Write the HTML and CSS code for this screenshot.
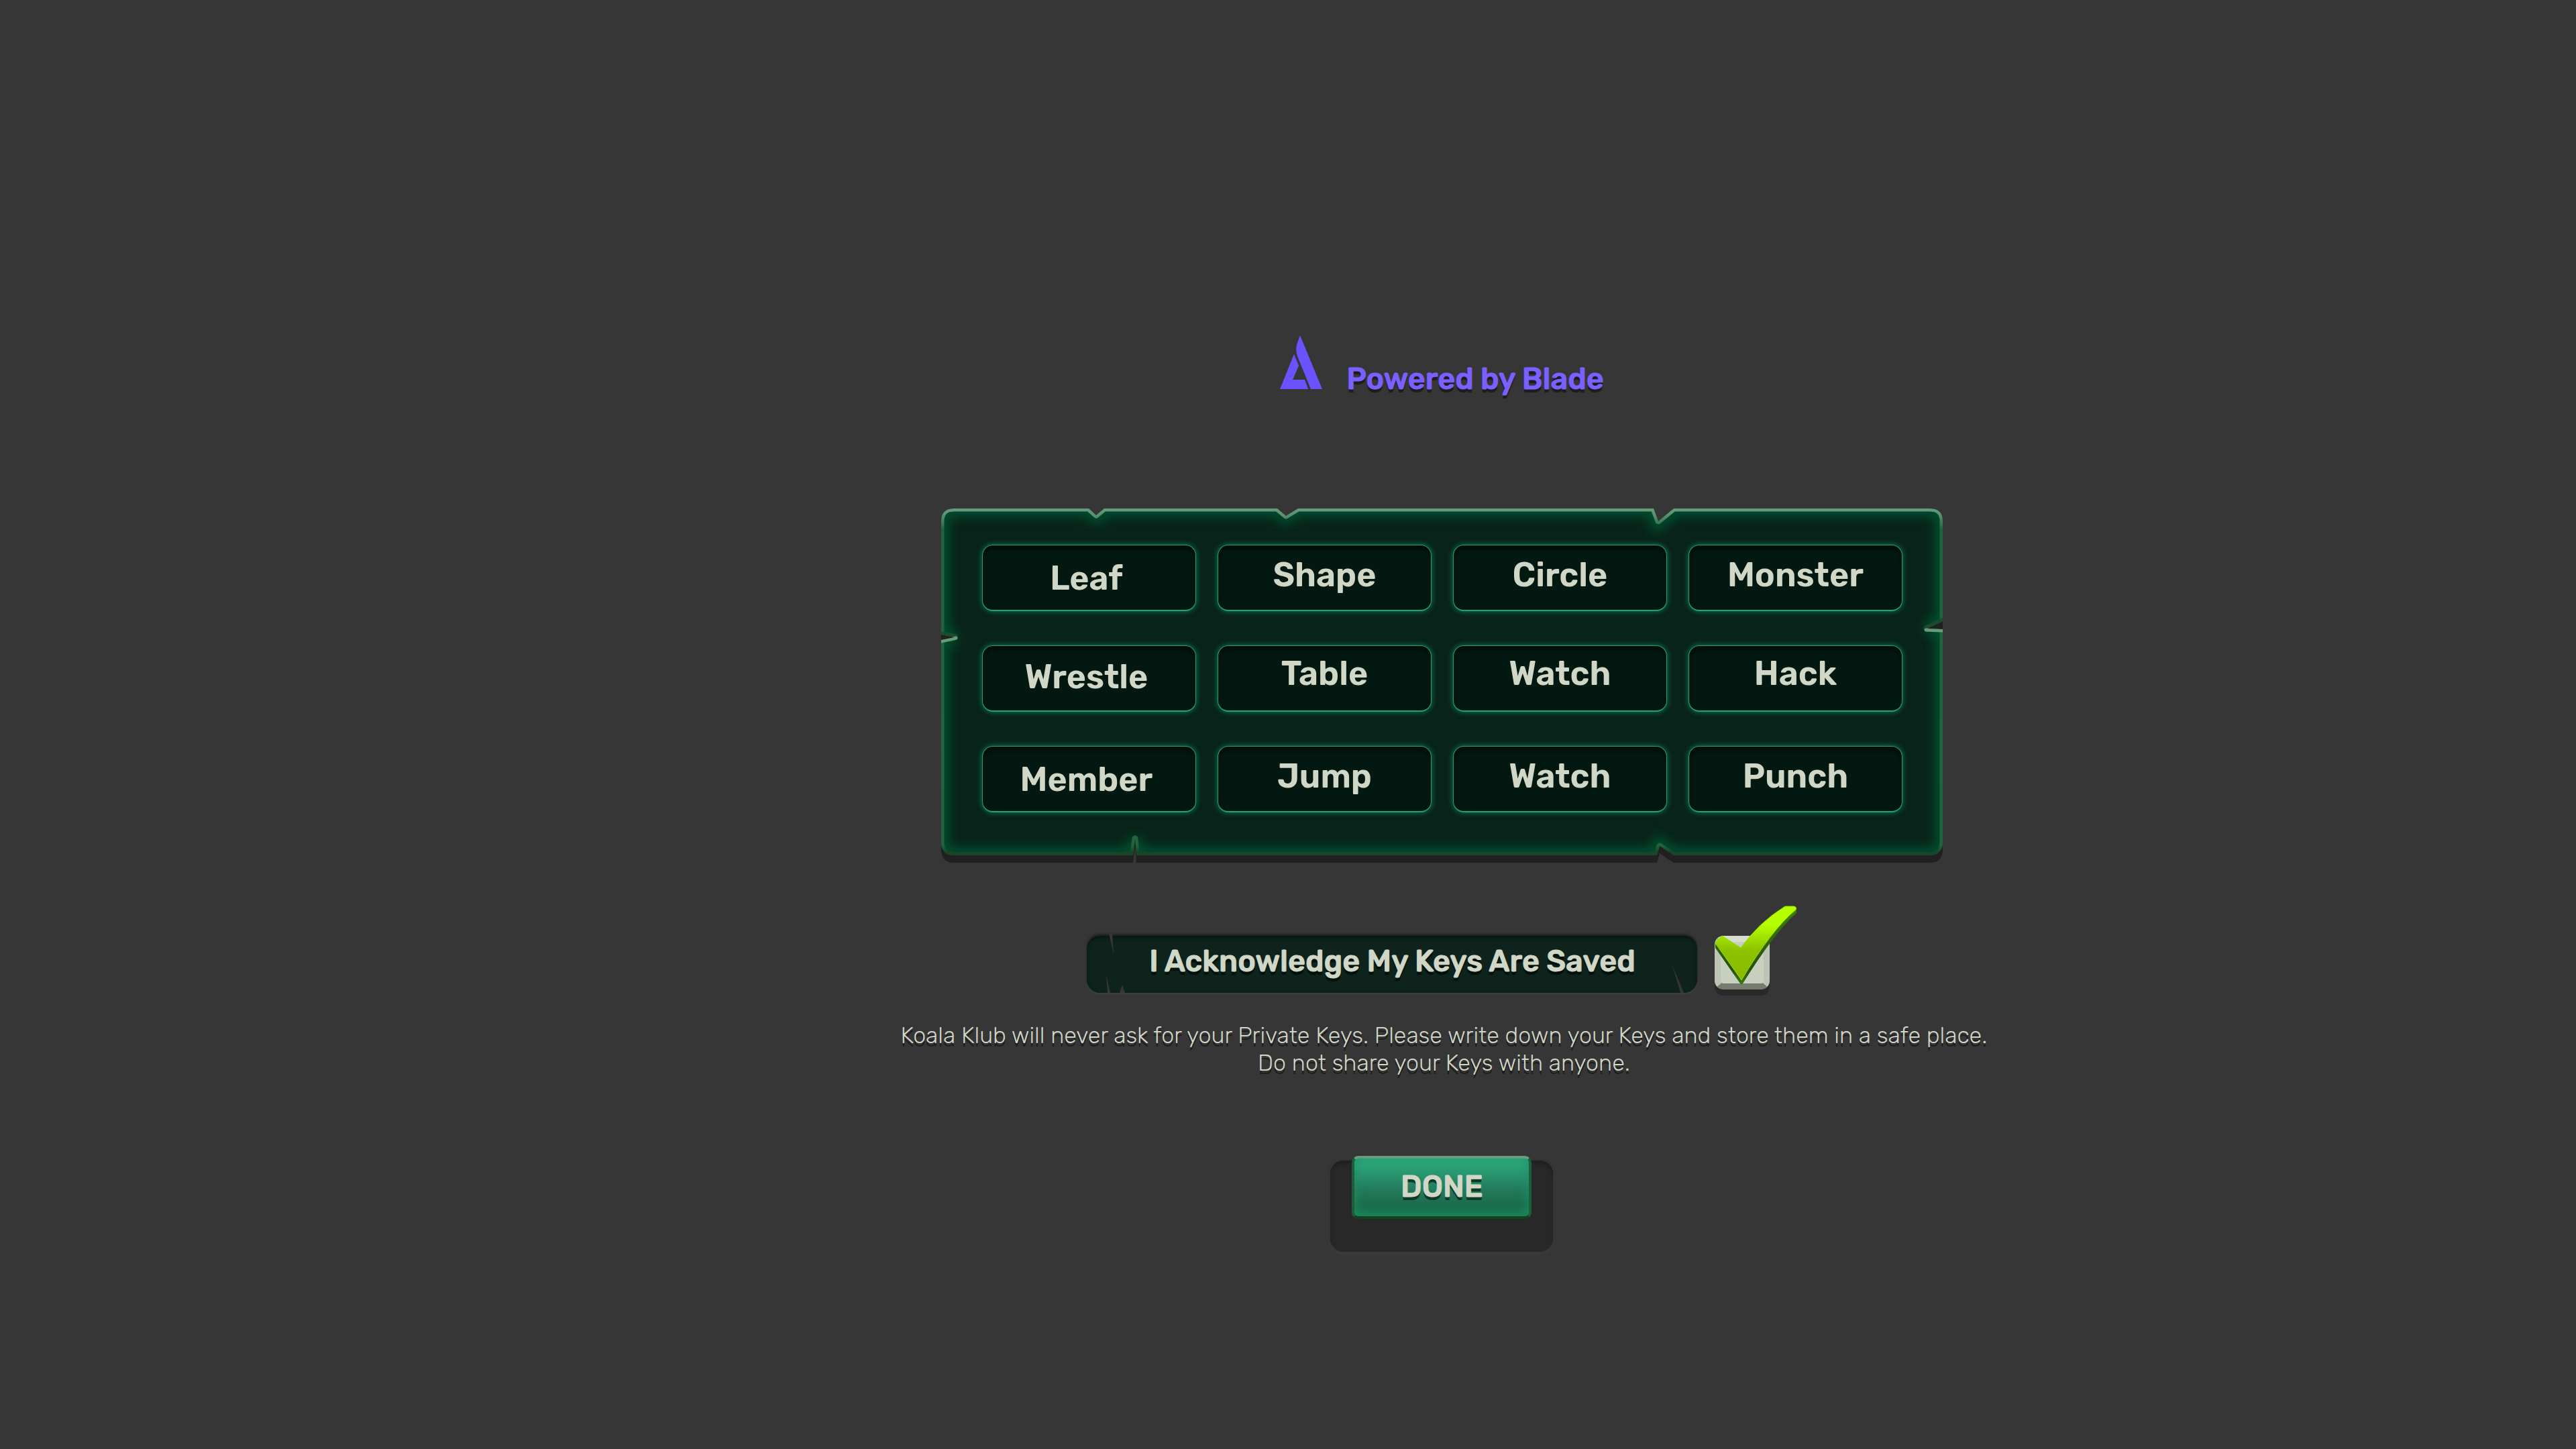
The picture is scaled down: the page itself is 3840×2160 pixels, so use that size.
FILE: index.html
```html
<!DOCTYPE html>
<html lang="en">
<head>
<meta charset="utf-8">
<meta name="viewport" content="width=device-width, initial-scale=1">
<title>Koala Klub – Private Keys</title>
<link rel="stylesheet" href="styles.css">
</head>
<body>
<main class="screen">
  <header class="brand">
    <svg class="brand-mark" viewBox="0 0 63 80" aria-hidden="true">
      <path d="M30 0 63 80H46L26 31Q23 23 25 14Z"/>
      <path d="M21 28 28 45 19 66H37L42 80H0Z"/>
    </svg>
    <p class="brand-text">Powered by Blade</p>
  </header>

  <section class="panel" aria-label="Recovery words">
    <svg class="panel-frame" viewBox="0 0 1493 528" preserveAspectRatio="none" aria-hidden="true">
      <defs>
        <path id="slab" d="M19 0H220L231 10 243 0H501L514 11 532 0H1062L1069 19 1092 0H1474Q1493 0 1493 19V168L1470 179 1493 180V497Q1493 517 1474 517H1092L1071 503 1067 517H291L289 492 286 517H19Q0 517 0 497V196L20 192 0 188V19Q0 0 19 0Z"/>
        <clipPath id="slab-clip"><use href="#slab"/></clipPath>
        <linearGradient id="rim" gradientUnits="userSpaceOnUse" x1="0" y1="0" x2="0" y2="517">
          <stop offset="0" stop-color="#669b7b"/>
          <stop offset=".02" stop-color="#5a8f70"/>
          <stop offset=".06" stop-color="#22633f"/>
          <stop offset=".97" stop-color="#21653d"/>
          <stop offset=".99" stop-color="#1b4429"/>
        </linearGradient>
        <filter id="soft" x="-5%" y="-10%" width="110%" height="120%"><feGaussianBlur stdDeviation="8"/></filter>
      </defs>
      <use href="#slab" y="11" fill="#202020"/>
      <g clip-path="url(#slab-clip)">
        <use href="#slab" fill="#08231a"/>
        <use href="#slab" fill="none" stroke="#064d2d" stroke-width="24" filter="url(#soft)"/>
        <use href="#slab" fill="none" stroke="url(#rim)" stroke-width="9" stroke-linejoin="round"/>
        <path d="M0 187 21 191M1493 167 1468 178" fill="none" stroke="#1c4a2c" stroke-width="7" stroke-linecap="round"/>
        <path d="M0 198 22 193M1493 182 1468 181" fill="none" stroke="#669b7b" stroke-width="5" stroke-linecap="round"/>
      </g>
    </svg>
    <ol class="words">
      <li>Leaf</li><li>Shape</li><li>Circle</li><li>Monster</li>
      <li>Wrestle</li><li>Table</li><li>Watch</li><li>Hack</li>
      <li>Member</li><li>Jump</li><li>Watch</li><li>Punch</li>
    </ol>
  </section>

  <div class="ack">
    <label class="ack-label" for="saved">
      <svg class="ack-cracks" viewBox="0 0 910 89" preserveAspectRatio="none" aria-hidden="true">
        <path d="M33 0H38L40 32ZM29 62 31 89H35ZM53 77 49 89H57ZM873 48 885 89H890Z"/>
      </svg>
      <span>I Acknowledge My Keys Are Saved</span>
    </label>
    <span class="tick">
      <input class="tick-box" type="checkbox" id="saved" checked>
      <svg class="tick-mark" viewBox="0 0 122 118" aria-hidden="true">
        <defs>
          <linearGradient id="lime" x1="0" y1="0" x2="0" y2="1">
            <stop offset=".25" stop-color="#b6ff00"/><stop offset=".6" stop-color="#8cc200"/><stop offset="1" stop-color="#8abb00"/>
          </linearGradient>
          <linearGradient id="moss" x1="0" y1="0" x2="0" y2="1">
            <stop offset="0" stop-color="#3f7f08"/><stop offset=".8" stop-color="#264f08"/><stop offset="1" stop-color="#3c7a10"/>
          </linearGradient>
        </defs>
        <path d="M1 55 40 110Q88 30 122 3V10Q90 38 42 115Q40 118 38 115L1 62Z" fill="url(#moss)"/>
        <path d="M1 55Q5 48 11 44L39 62Q66 24 105 0H118Q123 1 121 5Q84 36 40 110Z" fill="url(#lime)" stroke="#8fe000"/>
      </svg>
    </span>
  </div>

  <p class="note">Koala Klub will never ask for your Private Keys. Please write down your Keys and store them in a safe place.<br>Do not share your Keys with anyone.</p>

  <div class="well">
    <button class="done" type="button">DONE</button>
  </div>
</main>
</body>
</html>
```
FILE: styles.css
```css
* { box-sizing: border-box; }

body {
  margin: 0;
  min-height: 100vh;
  background: #363636;
  color: #d0d7c7;
  font-family: Rubik, Inter, sans-serif;
}

.screen {
  display: flex;
  flex-direction: column;
  align-items: center;
  padding: 500px 0 64px 11.95vw;
}

.brand {
  display: flex;
  align-items: baseline;
  gap: 36px;
}

.brand-mark {
  width: 63px;
  height: 80px;
  fill: #6b52ff;
}

.brand-text,
.ack-label,
.done {
  font-size: 45px;
  font-weight: 500;
  line-height: 48px;
  -webkit-text-stroke: 1px currentColor;
}

.brand-text {
  margin: 0;
  color: #7a60ff;
  text-shadow: 0 5px 1px #1c1c1c;
}

.panel {
  position: relative;
  width: 100%;
  max-width: 1493px;
  margin-top: 169px;
  padding: 54px 60px 64px 61px;
}

.panel-frame {
  position: absolute;
  top: 0;
  left: 0;
  width: 100%;
  height: calc(100% + 11px);
}

.words {
  position: relative;
  display: grid;
  grid-template-columns: repeat(4, 1fr);
  gap: 51px 32px;
  margin: 0;
  padding: 0;
  list-style: none;
}

.words li {
  display: flex;
  align-items: center;
  justify-content: center;
  height: 99px;
  padding-bottom: 8px;
  border: 1px solid #22a078;
  border-bottom-width: 2px;
  border-radius: 16px;
  background: #041812;
  box-shadow: 0 0 8px #12805a, inset 0 5px 6px #010a07;
  font-size: 50px;
  font-weight: 600;
}

.words li:nth-child(4n + 1) {
  padding-top: 2px;
  padding-right: 8px;
  padding-bottom: 0;
}

.words li:nth-child(n + 5):nth-child(-n + 8) { padding-bottom: 14px; }
.words li:nth-child(5):nth-child(4n + 1) { padding-bottom: 6px; }

.ack {
  display: flex;
  gap: 26px;
  margin-top: 120px;
}

.ack-label {
  position: relative;
  display: flex;
  align-items: center;
  justify-content: center;
  width: 910px;
  height: 85px;
  padding-bottom: 10px;
  border-radius: 20px;
  background: #0e231c;
  box-shadow: 0 -3px 3px #222, 0 2px 4px #414141, inset 0 3px 5px #081712;
  text-shadow: 0 5px 1px #04100b;
}

.ack-cracks {
  position: absolute;
  top: -4px;
  left: 0;
  width: 100%;
  height: 89px;
  fill: #363636;
}

.tick {
  position: relative;
  width: 122px;
}

.tick-box {
  appearance: none;
  display: block;
  width: 82px;
  height: 80px;
  margin: 0;
  border: 9px solid;
  border-color: #d8ddd1 #bcc4b3 #767c70;
  border-radius: 13px;
  background: #c7cfbe;
  box-shadow: 0 9px 0 #292929;
}

.tick-mark {
  position: absolute;
  top: -44px;
  left: 0;
  width: 122px;
  height: 118px;
  overflow: visible;
  pointer-events: none;
}

.tick-box:not(:checked) + .tick-mark { display: none; }

.note {
  margin: 43px 0 0;
  padding-left: 6px;
  font-size: 34px;
  font-weight: 300;
  line-height: 41px;
  text-align: center;
  text-shadow: 0 5px 0 #1e1e1e;
}

.well {
  display: flex;
  align-items: flex-start;
  justify-content: center;
  width: 332px;
  height: 136px;
  margin-top: 125px;
  border-radius: 20px;
  background: #282828;
  box-shadow: 0 0 3px #2c2c2c, 0 3px 4px #414141, inset 0 5px 4px #202020;
}

.done {
  width: 268px;
  height: 94px;
  margin: -7px 0 0;
  padding: 0 0 2px;
  border: 4px solid;
  border-color: #669b7b #1b6038 #164022;
  border-radius: 10px;
  background: linear-gradient(#2fb083, #227a5b 55%, #1b6b4c 80%, #16754e);
  box-shadow: inset 0 0 18px #1d9064;
  color: #d0d7c7;
  font-family: inherit;
  text-shadow: 0 5px 0 #0e3a29;
}
```
